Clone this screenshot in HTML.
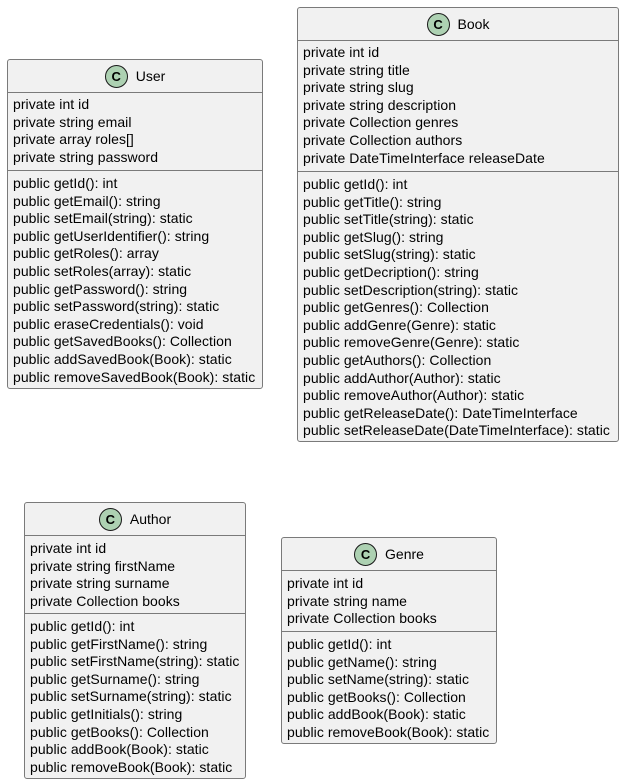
<!DOCTYPE html>
<html><head><style>
body{margin:0;width:624px;height:784px;background:#fff;position:relative;overflow:hidden;font-family:"Liberation Sans",Arial,sans-serif;font-size:14px;color:#000}
.b{position:absolute;background:#F1F1F1;border:1px solid #7a7a7a;border-radius:3px;box-sizing:border-box}
.h{position:absolute;left:0;right:0;top:0;border-bottom:1px solid #7a7a7a;display:flex;justify-content:center;align-items:center;gap:8px}
.c{width:21px;height:21px;border-radius:50%;background:#ADD1B2;border:1px solid #181818;display:flex;align-items:center;justify-content:center;font-weight:bold;font-size:13px}
.s{position:absolute;left:0;right:0;border-top:1px solid #7a7a7a}
.t{position:absolute;left:5px;line-height:17.6px;white-space:nowrap;letter-spacing:0.05px}
</style></head><body>

<div class="b" style="left:7px;top:59px;width:256px;height:330px">
<div class="h" style="height:32px"><div class="c">C</div><span>User</span></div>
<div class="t" style="top:36px">private int id<br>private string email<br>private array roles[]<br>private string password</div>
<div class="s" style="top:110px"></div>
<div class="t" style="top:115px">public getId(): int<br>public getEmail(): string<br>public setEmail(string): static<br>public getUserIdentifier(): string<br>public getRoles(): array<br>public setRoles(array): static<br>public getPassword(): string<br>public setPassword(string): static<br>public eraseCredentials(): void<br>public getSavedBooks(): Collection<br>public addSavedBook(Book): static<br>public removeSavedBook(Book): static</div>
</div>

<div class="b" style="left:297px;top:7px;width:322px;height:435px">
<div class="h" style="height:32px"><div class="c">C</div><span>Book</span></div>
<div class="t" style="top:36px">private int id<br>private string title<br>private string slug<br>private string description<br>private Collection genres<br>private Collection authors<br>private DateTimeInterface releaseDate</div>
<div class="s" style="top:163px"></div>
<div class="t" style="top:168px">public getId(): int<br>public getTitle(): string<br>public setTitle(string): static<br>public getSlug(): string<br>public setSlug(string): static<br>public getDecription(): string<br>public setDescription(string): static<br>public getGenres(): Collection<br>public addGenre(Genre): static<br>public removeGenre(Genre): static<br>public getAuthors(): Collection<br>public addAuthor(Author): static<br>public removeAuthor(Author): static<br>public getReleaseDate(): DateTimeInterface<br>public setReleaseDate(DateTimeInterface): static</div>
</div>

<div class="b" style="left:24px;top:502px;width:222px;height:277px">
<div class="h" style="height:32px"><div class="c">C</div><span>Author</span></div>
<div class="t" style="top:37px">private int id<br>private string firstName<br>private string surname<br>private Collection books</div>
<div class="s" style="top:110px"></div>
<div class="t" style="top:115px">public getId(): int<br>public getFirstName(): string<br>public setFirstName(string): static<br>public getSurname(): string<br>public setSurname(string): static<br>public getInitials(): string<br>public getBooks(): Collection<br>public addBook(Book): static<br>public removeBook(Book): static</div>
</div>

<div class="b" style="left:281px;top:537px;width:216px;height:207px">
<div class="h" style="height:32px"><div class="c">C</div><span>Genre</span></div>
<div class="t" style="top:37px">private int id<br>private string name<br>private Collection books</div>
<div class="s" style="top:93px"></div>
<div class="t" style="top:98px">public getId(): int<br>public getName(): string<br>public setName(string): static<br>public getBooks(): Collection<br>public addBook(Book): static<br>public removeBook(Book): static</div>
</div>

</body></html>
